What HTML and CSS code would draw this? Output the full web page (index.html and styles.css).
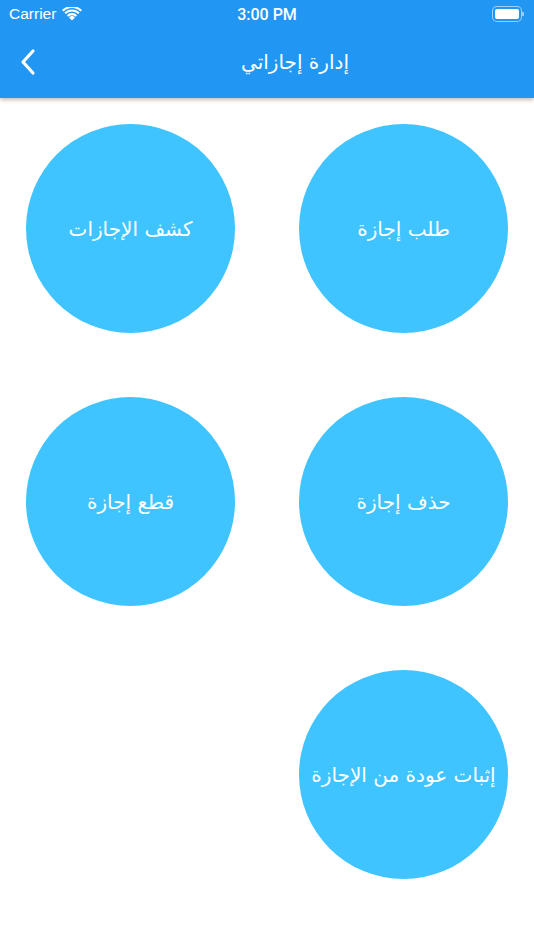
FILE: index.html
```html
<!DOCTYPE html>
<html lang="ar">
<head>
<meta charset="utf-8">
<link rel="stylesheet" href="styles.css">
</head>
<body>
<header class="appbar">
  <div class="status">
    <div class="status-left">
      <span class="carrier">Carrier</span>
      <svg class="wifi" width="20" height="14" viewBox="0 0 20 14">
        <path d="M10 13.6 L7 10.4 A4.4 4.4 0 0 1 13 10.4 Z" fill="#fff"/>
        <path d="M4.8 8.2 A7.4 7.4 0 0 1 15.2 8.2 L13.8 9.7 A5.4 5.4 0 0 0 6.2 9.7 Z" fill="#fff"/>
        <path d="M2.4 5.6 A10.8 10.8 0 0 1 17.6 5.6 L16.2 7.1 A8.8 8.8 0 0 0 3.8 7.1 Z" fill="#fff"/>
        <path d="M0 3.1 A14.2 14.2 0 0 1 20 3.1 L18.6 4.6 A12.2 12.2 0 0 0 1.4 4.6 Z" fill="#fff"/>
      </svg>
    </div>
    <span class="time">3:00 PM</span>
    <div class="battery"><div class="battery-fill"></div><div class="battery-tip"></div></div>
  </div>
  <div class="toolbar">
    <svg class="back" width="20" height="28" viewBox="0 0 20 28">
      <path d="M15 3 L5 14 L15 25" fill="none" stroke="#fff" stroke-width="3.2" stroke-linecap="round" stroke-linejoin="round"/>
    </svg>
    <h1 class="title">إدارة إجازاتي</h1>
  </div>
</header>
<main class="grid">
  <div class="circle">طلب إجازة</div>
  <div class="circle">كشف الإجازات</div>
  <div class="circle">حذف إجازة</div>
  <div class="circle">قطع إجازة</div>
  <div class="circle">إثبات عودة من الإجازة</div>
</main>
</body>
</html>
```
FILE: styles.css
```css
html, body {
  margin: 0;
  padding: 0;
  background: #ffffff;
  font-family: "DejaVu Sans", "Noto Sans", sans-serif;
}
.appbar {
  background: #2196f3;
  height: 98px;
  box-shadow: 0 2px 4px rgba(0,0,0,0.25);
  color: #fff;
  position: relative;
  z-index: 1;
}
.status {
  height: 28px;
  display: flex;
  align-items: center;
  justify-content: space-between;
  padding: 0 10px 0 9px;
  position: relative;
  font-family: "Liberation Sans", Arial, sans-serif;
}
.status-left {
  display: flex;
  align-items: center;
  gap: 6px;
}
.carrier {
  font-size: 15.5px;
}
.time {
  position: absolute;
  left: 0;
  right: 0;
  text-align: center;
  font-family: Roboto, "Liberation Sans", sans-serif;
  font-size: 16px;
  font-weight: 500;
}
.battery {
  display: flex;
  align-items: center;
}
.battery-fill {
  width: 24px;
  height: 10px;
  background: #fff;
  border-radius: 2px;
  box-shadow: 0 0 0 2px #2196f3, 0 0 0 3px rgba(255,255,255,0.55);
}
.battery-tip {
  width: 2px;
  height: 4px;
  margin-left: 3px;
  background: rgba(255,255,255,0.55);
  border-radius: 0 1px 1px 0;
}
.toolbar {
  height: 70px;
  display: flex;
  align-items: center;
  justify-content: center;
  position: relative;
}
.back {
  position: absolute;
  left: 18px;
  top: 20px;
}
.title {
  margin: -2px 0 0 56px;
  font-size: 20px;
  font-weight: normal;
}
.grid {
  direction: rtl;
  display: grid;
  grid-template-columns: 209px 209px;
  column-gap: 64px;
  row-gap: 64px;
  padding: 26px;
}
.circle {
  width: 209px;
  height: 209px;
  border-radius: 50%;
  background: #40c4ff;
  color: #fff;
  display: flex;
  align-items: center;
  justify-content: center;
  text-align: center;
  font-size: 20px;
  white-space: nowrap;
}
```
